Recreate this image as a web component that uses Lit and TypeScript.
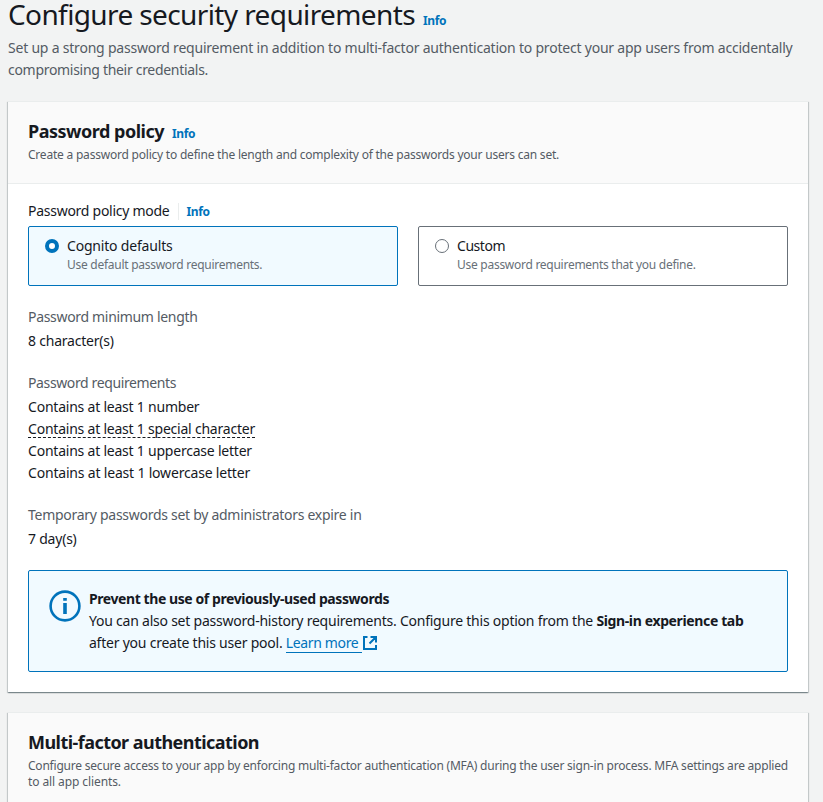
import { LitElement, html, css } from "lit";
import { customElement, state } from "lit/decorators.js";
import { classMap } from "lit/directives/class-map.js";

const modes = [
  { id: "defaults", label: "Cognito defaults", hint: "Use default password requirements." },
  { id: "custom", label: "Custom", hint: "Use password requirements that you define." },
];

@customElement("app-root")
class AppRoot extends LitElement {
  @state() private mode = "defaults";

  static styles = css`
    :host {
      display: block;
      box-sizing: border-box;
      height: 802px;
      overflow: hidden;
      padding: 0 15px 0 8px;
      background: #f2f3f3;
      color: #16191f;
      font: 14px/22px "Noto Sans", "Open Sans", sans-serif;
      letter-spacing: -0.22px;
    }
    * { box-sizing: border-box; }
    h1, h2, p, ul { margin: 0; padding: 0; }
    h1, h2, p, li, .text { white-space: nowrap; }
    .page-title { display: flex; align-items: baseline; gap: 8px; height: 37px; }
    h1 { font-size: 28px; line-height: 29px; font-weight: 400; letter-spacing: -0.61px; }
    h2 { font-size: 18px; line-height: 22px; font-weight: 700; letter-spacing: -0.49px; }
    .h2-mfa { letter-spacing: -0.543px; }
    .info { color: #0073bb; font-size: 12px; font-weight: 700; letter-spacing: -0.4px; text-decoration: none; }
    .intro { color: #545b64; letter-spacing: -0.212px; }
    .intro-end { letter-spacing: -0.3px; }

    .panel {
      margin-top: 20px;
      background: #fff;
      border-top: 1px solid #eaeded;
      box-shadow: 0 1px 1px 0 rgba(0, 28, 36, 0.3), 1px 1px 1px 0 rgba(0, 28, 36, 0.15), -1px 1px 1px 0 rgba(0, 28, 36, 0.15);
    }
    .panel-head { padding: 18px 20px 20px; background: #fafafa; border-bottom: 1px solid #eaeded; }
    .panel-title { display: flex; align-items: baseline; gap: 8px; height: 22px; margin-bottom: 5px; }
    .small { color: #545b64; font-size: 12px; line-height: 16px; letter-spacing: -0.214px; }
    .small-end { letter-spacing: -0.095px; }
    .panel-body { padding: 16px 20px 20px; }

    .field-label { display: flex; align-items: center; height: 22px; margin-bottom: 4px; }
    .mode-label { letter-spacing: -0.267px; }
    .field-label .info { margin-left: 8px; padding: 1px 0 0 8px; border-left: 1px solid #eaeded; line-height: 16px; }
    .tiles { display: grid; grid-template-columns: 1fr 1fr; gap: 20px; }
    .tile {
      display: flex;
      height: 60px;
      padding: 8px 15px;
      border: 1px solid #687078;
      border-radius: 2px;
      background: #fff;
      cursor: pointer;
    }
    .tile.on { border-color: #0073bb; background: #f1faff; }
    .radio { width: 16px; height: 16px; margin: 3px 7px 0 0; flex: none; }
    .radio circle { fill: #fff; stroke: #687078; }
    .on .radio circle { stroke: #0073bb; stroke-width: 4; }
    .defaults .label { letter-spacing: -0.19px; }
    .custom .label { letter-spacing: -0.45px; }
    .hint { color: #687078; font-size: 12px; line-height: 16px; letter-spacing: -0.27px; }

    .pair { margin-top: 20px; }
    .pair-key { color: #545b64; margin-bottom: 2px; }
    .k1 { letter-spacing: -0.321px; }
    .k2 { letter-spacing: -0.382px; }
    .k3 { letter-spacing: -0.279px; }
    ul { list-style: none; }
    li { height: 22px; }
    li.lower { letter-spacing: -0.188px; }
    .tip { display: inline-block; height: 20px; border-bottom: 1px dashed #16191f; }

    .alert {
      display: flex;
      height: 102px;
      margin-top: 20px;
      padding: 17px 20px;
      border: 1px solid #0073bb;
      border-radius: 2px;
      background: #f1faff;
    }
    .alert-icon { width: 32px; height: 32px; margin: 2px 8px 0 0; flex: none; }
    .alert-title { font-weight: 700; letter-spacing: -0.42px; }
    .alert-line { letter-spacing: -0.23px; }
    strong { letter-spacing: -0.367px; }
    .link { color: #0073bb; text-decoration: none; letter-spacing: -0.36px; }
    .link span { display: inline-block; height: 21px; padding-right: 4px; border-bottom: 1px solid #0073bb; vertical-align: top; }
    .ext { width: 16px; height: 16px; vertical-align: -3px; }
  `;

  private info() {
    return html`<a class="info">Info</a>`;
  }

  render() {
    return html`
      <div class="page-title"><h1>Configure security requirements</h1>${this.info()}</div>
      <p class="intro">Set up a strong password requirement in addition to multi-factor authentication to protect your app users from accidentally</p>
      <p class="intro intro-end">compromising their credentials.</p>

      <section class="panel">
        <header class="panel-head">
          <div class="panel-title"><h2>Password policy</h2>${this.info()}</div>
          <p class="small">Create a password policy to define the length and complexity of the passwords your users can set.</p>
        </header>
        <div class="panel-body">
          <div class="field-label"><span class="mode-label">Password policy mode</span>${this.info()}</div>
          <div class="tiles">
            ${modes.map(
              (m) => html`
                <div class=${classMap({ tile: true, on: this.mode === m.id, [m.id]: true })} @click=${() => (this.mode = m.id)}>
                  <svg class="radio" viewBox="0 0 16 16"><circle cx="8" cy="8" r=${this.mode === m.id ? 5 : 6.5}></circle></svg>
                  <div class="text">
                    <div class="label">${m.label}</div>
                    <div class="hint">${m.hint}</div>
                  </div>
                </div>
              `
            )}
          </div>
          <div class="pair">
            <p class="pair-key k1">Password minimum length</p>
            <p>8 character(s)</p>
          </div>
          <div class="pair">
            <p class="pair-key k2">Password requirements</p>
            <ul>
              <li>Contains at least 1 number</li>
              <li><span class="tip">Contains at least 1 special character</span></li>
              <li>Contains at least 1 uppercase letter</li>
              <li class="lower">Contains at least 1 lowercase letter</li>
            </ul>
          </div>
          <div class="pair">
            <p class="pair-key k3">Temporary passwords set by administrators expire in</p>
            <p>7 day(s)</p>
          </div>
          <div class="alert">
            <svg class="alert-icon" viewBox="0 0 32 32">
              <circle cx="16" cy="16" r="14.4" fill="none" stroke="#0073bb" stroke-width="2.6"></circle>
              <path d="M14.2 8h3.6v2.8h-3.6zM14.2 13h3.6v11h-3.6z" fill="#0073bb"></path>
            </svg>
            <div>
              <p class="alert-title">Prevent the use of previously-used passwords</p>
              <p class="alert-line">You can also set password-history requirements. Configure this option from the <strong>Sign-in experience tab</strong></p>
              <p class="alert-line">after you create this user pool. <a class="link"><span>Learn more</span><svg class="ext" viewBox="0 0 16 16" fill="none" stroke="#0073bb" stroke-width="2"><path d="M5.5 2H2v12h12v-4M8.5 2H14v5.5M14 2L7.5 8.5"></path></svg></a></p>
            </div>
          </div>
        </div>
      </section>

      <section class="panel">
        <header class="panel-head">
          <div class="panel-title"><h2 class="h2-mfa">Multi-factor authentication</h2></div>
          <p class="small">Configure secure access to your app by enforcing multi-factor authentication (MFA) during the user sign-in process. MFA settings are applied</p>
          <p class="small small-end">to all app clients.</p>
        </header>
      </section>
    `;
  }
}
